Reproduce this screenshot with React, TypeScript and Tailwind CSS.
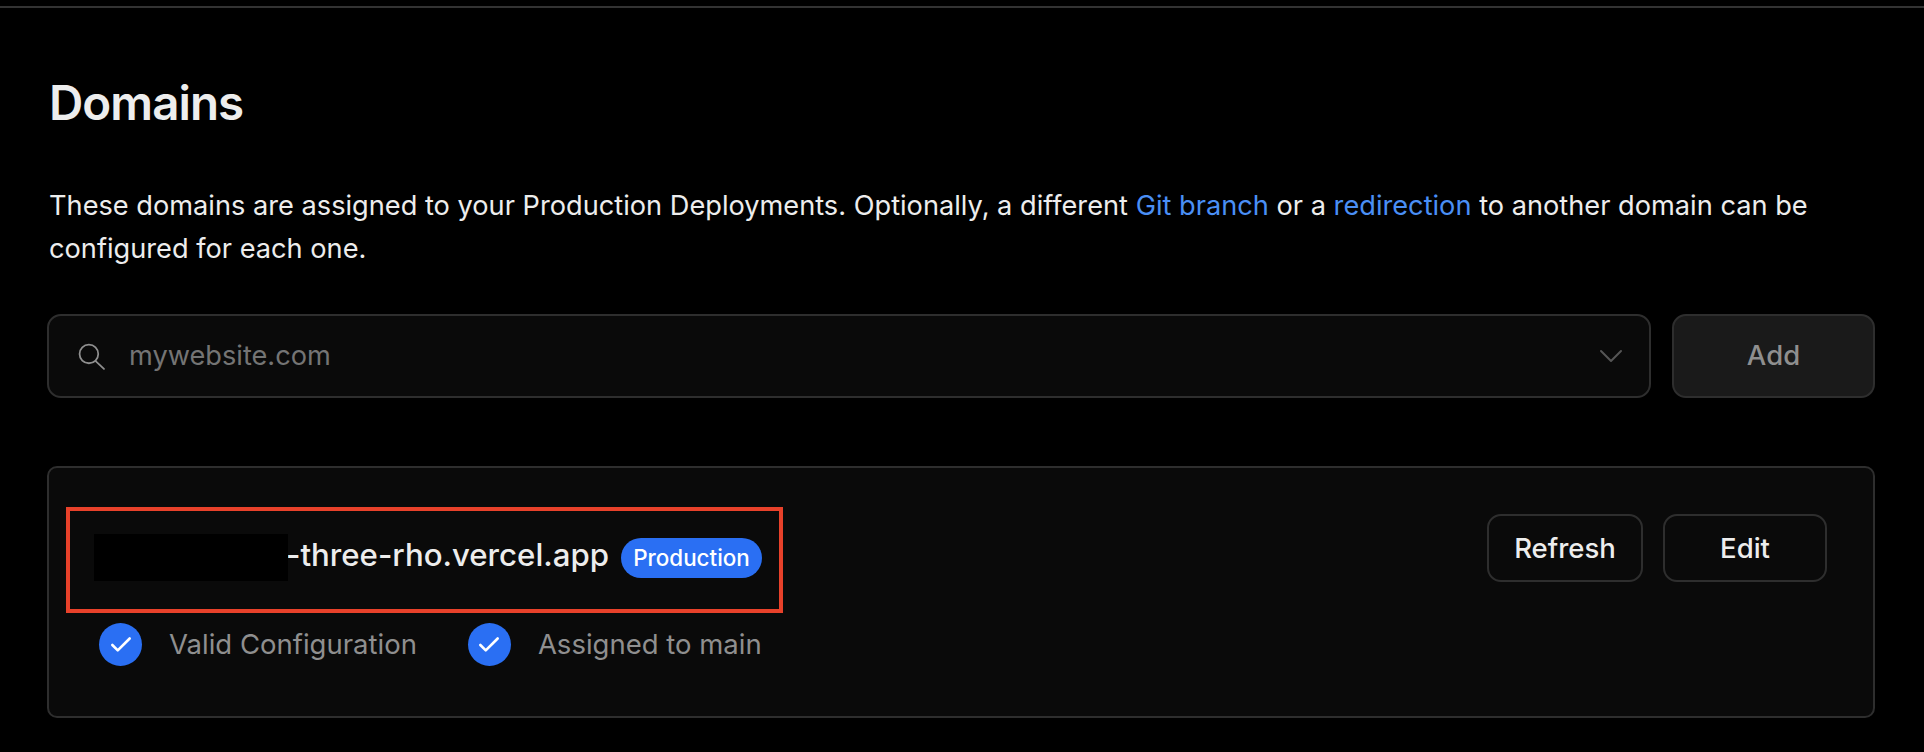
import { Check, ChevronDown } from "lucide-react";

function StatusItem({ label }: { label: string }) {
  return (
    <div className="flex items-center gap-[27px]">
      <span className="flex h-[43px] w-[43px] items-center justify-center rounded-full bg-[#2a6ff3]">
        <Check size={26} strokeWidth={2.4} className="text-white" />
      </span>
      <span className="text-[27.5px] leading-[43px] text-[#8f8f8f]">{label}</span>
    </div>
  );
}

export default function App() {
  return (
    <div className="h-[752px] w-full overflow-hidden bg-black font-['Inter',sans-serif] text-[#ededed]">
      <div className="pt-[6px]">
        <div className="h-[2px] bg-[#333333]" />
      </div>
      <main className="pl-[47px] pr-[49px] pt-[67px]">
        <h1 className="pl-[2px] text-[47.5px] font-semibold leading-[56px] tracking-[-0.02em]">Domains</h1>

        <p className="mt-[53px] pl-[2px] text-[27.2px] leading-[43px]">
          These domains are assigned to your Production Deployments. Optionally, a different{" "}
          <a className="text-[#4a8ff5]">Git branch</a> or a <a className="text-[#4a8ff5]">redirection</a> to another domain can be
          configured for each one.
        </p>

        <div className="mt-[44px] flex gap-[21px]">
          <div className="flex h-[84px] flex-1 items-center rounded-[14px] border-2 border-[#2e2e2e] bg-[#0a0a0a] pl-[29px] pr-[18px]">
            <svg width="27" height="27" viewBox="0 0 26 26" fill="none" stroke="#8f8f8f" strokeWidth="1.7" strokeLinecap="round">
              <circle cx="10.5" cy="10.5" r="9" />
              <path d="M17 17.5 L25 25" />
            </svg>
            <span className="ml-[24px] flex-1 text-[27.2px] text-[#747474]">mywebsite.com</span>
            <ChevronDown size={40} strokeWidth={1.2} className="text-[#555555]" />
          </div>
          <button className="h-[84px] w-[203px] rounded-[14px] border-2 border-[#2e2e2e] bg-[#1a1a1a] text-[27.5px] font-medium text-[#8f8f8f]">
            Add
          </button>
        </div>

        <section className="relative mt-[68px] h-[252px] rounded-[10px] border-2 border-[#2e2e2e] bg-[#0a0a0a] pl-[50px] pr-[46px]">
          <div className="flex justify-between pt-[46px]">
            <div>
              <div className="flex h-[67px] items-center pl-[187px] pt-[16px]">
                <span className="text-[31.2px] font-medium">-three-rho.vercel.app</span>
                <span className="ml-[12px] mt-[4px] flex h-[40px] w-[141px] items-center justify-center rounded-full bg-[#2a6ff3] text-[22.4px] font-medium text-white">
                  Production
                </span>
              </div>
              <div className="mt-[42px] flex gap-[51px]">
                <StatusItem label="Valid Configuration" />
                <StatusItem label="Assigned to main" />
              </div>
            </div>
            <div className="flex gap-[20px]">
              <button className="h-[68px] w-[156px] rounded-[14px] border-2 border-[#2e2e2e] pt-[1px] text-[27.5px] font-medium">Refresh</button>
              <button className="h-[68px] w-[164px] rounded-[14px] border-2 border-[#2e2e2e] pt-[1px] text-[27.5px] font-medium">Edit</button>
            </div>
          </div>
          {/* redaction + annotation drawn over the card */}
          <div className="absolute left-[45px] top-[66px] h-[47px] w-[194px] bg-black" />
          <div className="absolute left-[17px] top-[39px] h-[106px] w-[717px] border-[4px] border-[#e8412a]" />
        </section>
      </main>
    </div>
  );
}
